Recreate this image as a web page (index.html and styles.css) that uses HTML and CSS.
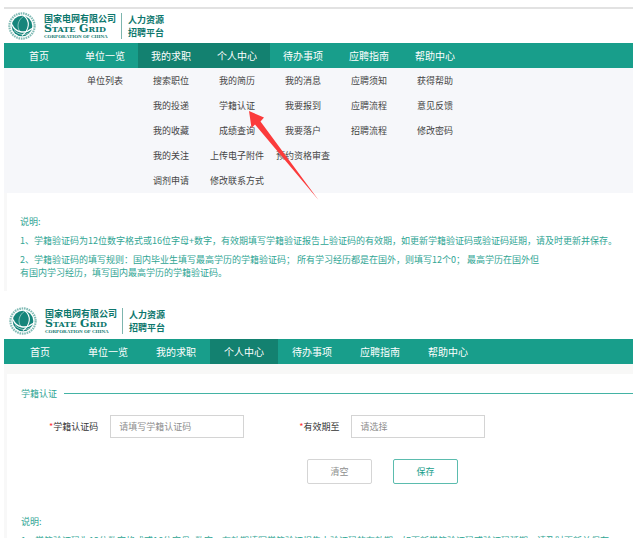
FILE: index.html
```html
<!DOCTYPE html>
<html lang="zh-CN">
<head>
<meta charset="utf-8">
<meta name="viewport" content="width=device-width, initial-scale=1">
<title>国家电网有限公司 人力资源招聘平台</title>
<link rel="stylesheet" href="styles.css">
</head>
<body>
<svg class="defs" aria-hidden="true">
  <symbol id="globe" viewBox="0 0 28 28">
    <circle cx="14" cy="14" r="12.6" fill="none" stroke="#2d8d84" stroke-width="2.200" stroke-dasharray="1.600 .8" opacity=".6"/>
    <circle cx="14" cy="14" r="10.300" fill="#16857b"/>
    <g fill="none" stroke="#fff">
      <path d="M16 3.800C10 8 8.500 14 11.500 19" stroke-width=".7" opacity=".7"/>
      <path d="M16 3.800C22.500 9 21.500 18 14 23.500" stroke-width="1.100"/>
      <path d="M4 12.500C7 20.500 17 22.500 24 16.500" stroke-width="1.300"/>
      <path d="M6 18.500C11 23.500 18 23.500 22.500 20" stroke-width=".7" opacity=".8"/>
    </g>
  </symbol>
</svg>

<section class="screen screen-menu">
  <header class="brand">
    <svg class="globe" role="img" aria-label="国家电网"><use href="#globe"/></svg>
    <div class="company">
      <span class="company-cn">国家电网有限公司</span>
      <span class="company-en">State Grid</span>
      <span class="company-sub">CORPORATION OF CHINA</span>
    </div>
    <div class="platform"><span>人力资源</span><span>招聘平台</span></div>
  </header>
  <nav class="nav">
    <a href="#">首页</a>
    <a href="#">单位一览</a>
    <a href="#" class="active">我的求职</a>
    <a href="#" class="active">个人中心</a>
    <a href="#">待办事项</a>
    <a href="#">应聘指南</a>
    <a href="#">帮助中心</a>
  </nav>
  <div class="submenu">
    <div class="col"></div>
    <div class="col"><a href="#">单位列表</a></div>
    <div class="col"><a href="#">搜索职位</a><a href="#">我的投递</a><a href="#">我的收藏</a><a href="#">我的关注</a><a href="#">调剂申请</a></div>
    <div class="col"><a href="#">我的简历</a><a href="#">学籍认证</a><a href="#">成绩查询</a><a href="#">上传电子附件</a><a href="#">修改联系方式</a></div>
    <div class="col"><a href="#">我的消息</a><a href="#">我要报到</a><a href="#">我要落户</a><a href="#">预约资格审查</a></div>
    <div class="col"><a href="#">应聘须知</a><a href="#">应聘流程</a><a href="#">招聘流程</a></div>
    <div class="col"><a href="#">获得帮助</a><a href="#">意见反馈</a><a href="#">修改密码</a></div>
    <svg class="arrow" viewBox="0 0 70 90" aria-hidden="true"><path d="M0 0L15 6.500L11.500 10.500L69.500 89L6 13.500L2.500 17Z" fill="#fb3b3b"/></svg>
  </div>
  <main class="panel">
    <div class="notes">
      <h2>说明:</h2>
      <p>1、学籍验证码为12位数字格式或16位字母+数字，有效期填写学籍验证报告上验证码的有效期，如更新学籍验证码或验证码延期，请及时更新并保存。</p>
      <p>2、学籍验证码的填写规则：国内毕业生填写最高学历的学籍验证码； 所有学习经历都是在国外，则填写12个0； 最高学历在国外但<br>有国内学习经历，填写国内最高学历的学籍验证码。</p>
    </div>
  </main>
</section>

<section class="screen screen-form">
  <header class="brand">
    <svg class="globe" role="img" aria-label="国家电网"><use href="#globe"/></svg>
    <div class="company">
      <span class="company-cn">国家电网有限公司</span>
      <span class="company-en">State Grid</span>
      <span class="company-sub">CORPORATION OF CHINA</span>
    </div>
    <div class="platform"><span>人力资源</span><span>招聘平台</span></div>
  </header>
  <nav class="nav">
    <a href="#">首页</a>
    <a href="#">单位一览</a>
    <a href="#">我的求职</a>
    <a href="#" class="active">个人中心</a>
    <a href="#">待办事项</a>
    <a href="#">应聘指南</a>
    <a href="#">帮助中心</a>
  </nav>
  <main class="panel">
    <form>
      <h1 class="section-title">学籍认证</h1>
      <div class="fields">
        <div class="field">
          <label for="code"><span class="req">*</span>学籍认证码</label>
          <input id="code" type="text" placeholder="请填写学籍认证码">
        </div>
        <div class="field">
          <label for="until"><span class="req">*</span>有效期至</label>
          <input id="until" type="text" placeholder="请选择">
        </div>
      </div>
      <div class="actions">
        <button type="reset">清空</button>
        <button type="submit" class="primary">保存</button>
      </div>
    </form>
    <div class="notes">
      <h2>说明:</h2>
      <p>1、学籍验证码为12位数字格式或16位字母+数字，有效期填写学籍验证报告上验证码的有效期，如更新学籍验证码或验证码延期，请及时更新并保存。</p>
    </div>
  </main>
</section>
</body>
</html>
```
FILE: styles.css
```css
* { box-sizing: border-box; }

body {
  margin: 0;
  padding: 7px 7px 0 4px;
  height: 100vh;
  overflow: hidden;
  background: #fff;
  color: #444;
  font: 9px/13px "Noto Sans CJK SC", sans-serif;
}

a { color: inherit; text-decoration: none; }
h1, h2, p { margin: 0; font-size: inherit; font-weight: 400; }

.defs { position: absolute; width: 0; height: 0; }

.brand {
  display: flex;
  align-items: center;
  height: 36px;
  padding-left: 4px;
  color: #0d776d;
}
.screen-menu .brand { border-top: 2px solid #e2e2e2; }
.screen-form .brand { height: 48px; padding: 12px 0 0 5px; }

.globe { width: 28px; height: 28px; flex: none; }

.company {
  display: flex;
  flex-direction: column;
  margin-left: 8px;
  font-weight: 700;
}
.company-cn { line-height: 11px; }
.company-en {
  font: small-caps 700 11px/10px "DejaVu Serif", serif;
  white-space: nowrap;
}
.company-sub { font: 700 5px/5px "Liberation Serif", serif; white-space: nowrap; }

.platform {
  display: flex;
  flex-direction: column;
  margin-left: 5px;
  padding-left: 6px;
  border-left: 1px solid #7db5ae;
  font: 700 9px/13px "Noto Sans CJK SC", sans-serif;
}

.nav {
  display: flex;
  height: 25px;
  padding-left: 2px;
  background: #189e8b;
  color: #fff;
  font-size: 10px;
  line-height: 25px;
  text-align: center;
}
.nav .active { background: #138170; }
.screen-menu .nav a, .submenu .col { width: 66px; }
.screen-form .nav a { width: 68px; }

.submenu {
  position: relative;
  display: flex;
  padding-left: 2px;
  background: #f6f7fa;
  text-align: center;
}
.col a { display: block; line-height: 25px; white-space: nowrap; }

.arrow {
  position: absolute;
  left: 245px;
  top: 43px;
  width: 70px;
  height: 90px;
}

.panel { border-left: 3px solid #f8f8f8; }
.screen-menu .panel { padding: 22px 0 12px 13px; }
.screen-form .panel {
  border-top: 10px solid #f8f8f7;
  padding: 13px 0 0 14px;
}

.notes { color: #2fa594; }
.notes p { margin-top: 6px; white-space: nowrap; }

.section-title {
  display: flex;
  align-items: center;
  gap: 7px;
  color: #2fa594;
}
.section-title::after {
  content: "";
  flex: 1;
  height: 1px;
  background: #43b3a4;
}

.fields { display: flex; gap: 55px; margin: 15px 0 0 28px; }
.field { display: flex; align-items: center; gap: 12px; color: #333; }
.req { color: #f33; }
.field input {
  width: 134px;
  height: 23px;
  padding: 0 8px;
  border: 1px solid #d4d4d4;
  background: #fff;
  font: inherit;
}
.field input::placeholder { color: #8e8e8e; opacity: 1; }

.actions { display: flex; gap: 21px; margin: 21px 0 31px 286px; }
.actions button {
  width: 65px;
  height: 25px;
  padding: 0;
  border: 1px solid #d5d5d5;
  border-radius: 2px;
  background: #fff;
  color: #8e8e8e;
  font: inherit;
}
.actions .primary { border-color: #5bbcae; color: #189e8b; }
```
